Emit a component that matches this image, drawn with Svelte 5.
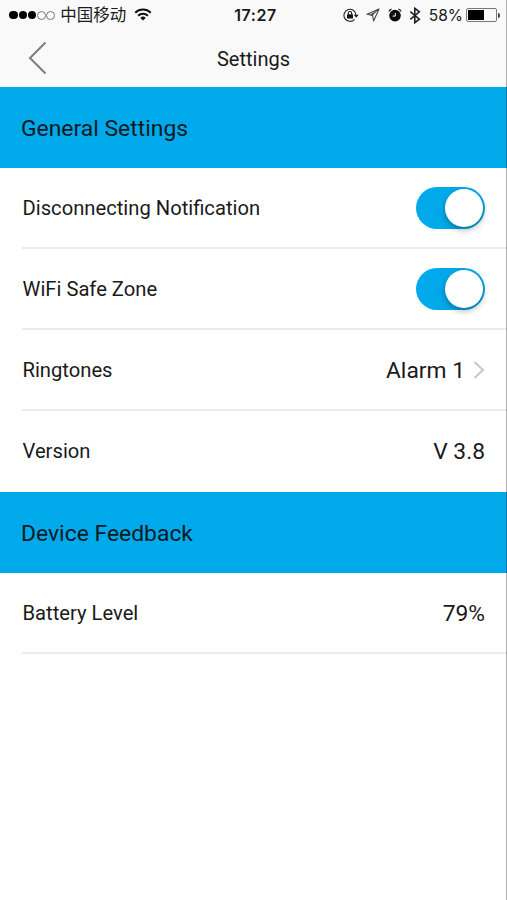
<script lang="ts">
  type Row = {
    label: string;
    kind: "toggle" | "link" | "text";
    value?: string;
  };

  type Section = { title: string; rows: Row[] };

  let notification = $state(true);
  let safeZone = $state(true);

  const signal = [true, true, true, false, false];
  const batteryLevel = 58;

  const sections: Section[] = [
    {
      title: "General Settings",
      rows: [
        { label: "Disconnecting Notification", kind: "toggle" },
        { label: "WiFi Safe Zone", kind: "toggle" },
        { label: "Ringtones", kind: "link", value: "Alarm 1" },
        { label: "Version", kind: "text", value: "V 3.8" },
      ],
    },
    {
      title: "Device Feedback",
      rows: [{ label: "Battery Level", kind: "text", value: "79%" }],
    },
  ];

  function isOn(label: string) {
    return label === "WiFi Safe Zone" ? safeZone : notification;
  }

  function toggle(label: string) {
    if (label === "WiFi Safe Zone") safeZone = !safeZone;
    else notification = !notification;
  }
</script>

<div class="screen">
  <header>
    <div class="status-bar">
      <div class="carrier">
        <div class="signal">
          {#each signal as on}
            <span class="dot" class:on></span>
          {/each}
        </div>
        <span class="operator">中国移动</span>
        <svg class="wifi" width="18" height="13" viewBox="0 0 18 13">
          <g fill="none" stroke="#111" stroke-width="2">
            <path d="M1.2 4.7a11.2 11.2 0 0 1 15.6 0" />
            <path d="M4.1 7.8a7 7 0 0 1 9.8 0" />
          </g>
          <path d="M9 12.6 6.3 9.9a3.9 3.9 0 0 1 5.4 0Z" fill="#111" />
        </svg>
      </div>
      <span class="time">17:27</span>
      <div class="indicators">
        <svg width="16" height="14" viewBox="0 0 16 14">
          <path d="M11.5 11.3A6 6 0 1 1 13 7.2" fill="none" stroke="#222" stroke-width="1.1" />
          <path d="M10.7 6.8h5l-2.5 3Z" fill="#222" />
          <rect x="4" y="6.3" width="6" height="4.2" rx=".5" fill="#111" />
          <path d="M5.3 6.5V5.2a1.7 1.7 0 0 1 3.4 0v1.3" fill="none" stroke="#111" stroke-width="1.1" />
        </svg>
        <svg class="location" width="14" height="14" viewBox="0 0 14 14">
          <path d="M13 1 1 6.3l5.6 1.1 1 5.6Z" fill="none" stroke="#444" stroke-width="1.1" stroke-linejoin="round" />
          <path d="m13 1-6.4 6.4-2.6-.6Z" fill="#444" />
        </svg>
        <svg class="alarm" width="14" height="14" viewBox="0 0 14 14">
          <circle cx="7" cy="7.6" r="5.8" fill="#0a0a0a" />
          <path d="M.9 3.5Q1.5 1.6 3.6 1.2M13.1 3.5Q12.5 1.6 10.4 1.2" fill="none" stroke="#222" stroke-width="1.2" />
          <path d="M4.6 8.1h2.7V5" fill="none" stroke="#fff" stroke-width="1" />
        </svg>
        <svg class="bluetooth" width="12" height="17" viewBox="0 0 12 17">
          <path d="m1.3 4.7 9 7.5-4.5 3.5V1.3l4.5 3.5-9 7.5" fill="none" stroke="#222" stroke-width="1.6" />
        </svg>
        <span class="percent">{batteryLevel}%</span>
        <div class="battery">
          <div class="level" style="width: {batteryLevel}%"></div>
        </div>
        <span class="battery-tip"></span>
      </div>
    </div>
    <nav>
      <button class="back" aria-label="Back">
        <svg width="20" height="34" viewBox="0 0 20 34">
          <path d="M17.5 1.5 2 17l15.5 15.5" fill="none" stroke="#7d7d7d" stroke-width="2" />
        </svg>
      </button>
      <h1>Settings</h1>
    </nav>
  </header>

  {#each sections as section}
    <section>
      <h2>{section.title}</h2>
      {#each section.rows as row, i}
        <div class="row" class:last={i === section.rows.length - 1 && section.rows.length > 1}>
          <span class="label">{row.label}</span>
          {#if row.kind === "toggle"}
            <button
              class="switch"
              class:on={isOn(row.label)}
              role="switch"
              aria-checked={isOn(row.label)}
              aria-label={row.label}
              onclick={() => toggle(row.label)}
            >
              <span class="knob"></span>
            </button>
          {:else}
            <span class="value">{row.value}</span>
            {#if row.kind === "link"}
              <svg class="chevron" width="12" height="20" viewBox="0 0 12 20">
                <path d="m1.5 2 8.5 8-8.5 8" fill="none" stroke="#c8c8c8" stroke-width="2" />
              </svg>
            {/if}
          {/if}
        </div>
      {/each}
    </section>
  {/each}
</div>

<style>
  :global(body) {
    background: #fff;
  }

  .screen {
    position: relative;
    width: 507px;
    height: 900px;
    overflow: hidden;
    background: #fff;
    color: #1a1a1a;
    font-family: Roboto, "Noto Sans CJK SC", sans-serif;
  }

  /* thin shade down the right edge, over bars and rows alike */
  .screen::after {
    content: "";
    position: absolute;
    top: 0;
    right: 0;
    bottom: 0;
    width: 1px;
    background: rgba(0, 0, 0, 0.3);
  }

  header {
    height: 87px;
    background: #f9f9f9;
  }

  .status-bar {
    display: grid;
    grid-template-columns: 1fr auto 1fr;
    align-items: center;
    height: 30px;
    padding: 0 7px 0 9px;
  }

  .carrier,
  .indicators,
  .signal {
    display: flex;
    align-items: center;
  }

  .signal {
    gap: 0.3px;
  }

  .dot {
    box-sizing: border-box;
    width: 9px;
    height: 9px;
    border: 1px solid #777;
    border-radius: 50%;
  }

  .dot.on {
    width: 8.4px;
    height: 8.4px;
    margin: 0 0.3px;
    border: 0;
    background: #000;
  }

  .operator {
    margin-left: 5px;
    padding-top: 2px;
    font-size: 16.5px;
    line-height: 20px;
  }

  .wifi {
    margin-left: 8px;
    margin-top: -1px;
  }

  .time {
    padding-left: 2px;
    font-family: Inter, sans-serif;
    font-size: 16px;
    font-weight: 600;
    letter-spacing: 0.6px;
  }

  .indicators {
    justify-content: flex-end;
  }

  .location {
    margin-left: 7px;
  }

  .alarm {
    margin-left: 8px;
  }

  .bluetooth {
    margin-left: 7px;
  }

  .percent {
    margin-left: 8px;
    font-family: Inter, sans-serif;
    font-size: 15.5px;
  }

  .battery {
    box-sizing: border-box;
    width: 31px;
    height: 14px;
    margin-left: 3px;
    padding: 1px;
    border: 1px solid #777;
    border-radius: 2px;
  }

  .level {
    height: 100%;
    background: #000;
  }

  .battery-tip {
    width: 2px;
    height: 5px;
    margin-left: 1px;
    border-radius: 0 2px 2px 0;
    background: #444;
  }

  nav {
    display: grid;
    grid-template-columns: 1fr auto 1fr;
    align-items: center;
    height: 57px;
  }

  .back {
    justify-self: start;
    margin: -2px 0 0 28px;
    padding: 0;
    border: 0;
    background: none;
    line-height: 0;
  }

  h1 {
    margin: 0;
    font-size: 20px;
    font-weight: 400;
  }

  h2 {
    box-sizing: border-box;
    height: 81px;
    margin: 0;
    padding-left: 21px;
    background: #00a9ea;
    color: #0b1a22;
    font-size: 22.9px;
    font-weight: 400;
    line-height: 83px;
  }

  .row {
    display: flex;
    align-items: center;
    box-sizing: border-box;
    height: 81px;
    margin-left: 22px;
    padding-right: 22px;
    border-bottom: 2px solid #ebebeb;
  }

  .row.last {
    border-bottom-color: transparent;
  }

  .label {
    flex: 1;
    padding: 1px 0 0 0.5px;
    font-size: 20.2px;
  }

  .value {
    padding-top: 2px;
    font-size: 22.8px;
  }

  .chevron {
    margin: 1px 0 0 8px;
  }

  .switch {
    display: flex;
    align-items: center;
    box-sizing: border-box;
    width: 69px;
    height: 42px;
    margin-top: 1px;
    padding: 0 2px;
    border: 0;
    border-radius: 21px;
    background: #ddd;
  }

  .switch.on {
    justify-content: flex-end;
    background: #00a9ea;
  }

  .knob {
    width: 38px;
    height: 38px;
    border-radius: 50%;
    background: #fff;
    box-shadow: 0 3px 6px rgba(0, 0, 0, 0.3);
  }
</style>
